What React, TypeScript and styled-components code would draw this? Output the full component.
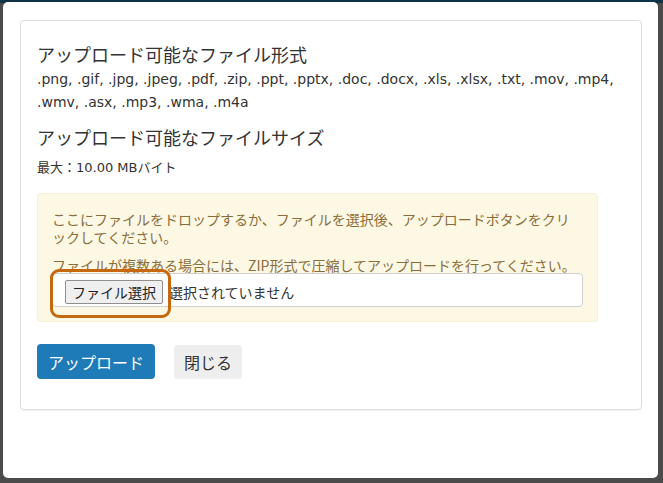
import React from 'react';
import styled, { createGlobalStyle } from 'styled-components';

const GlobalStyle = createGlobalStyle`
  html, body {
    margin: 0;
    padding: 0;
    height: 100%;
  }
  body {
    background: linear-gradient(to bottom, #0f3347 0, #0f3347 3px, #4b4b4b 3px);
    font-family: "DejaVu Sans", "Noto Sans CJK JP", sans-serif;
    color: #333;
    overflow: hidden;
  }
`;

const FORMATS =
  '.png, .gif, .jpg, .jpeg, .pdf, .zip, .ppt, .pptx, .doc, .docx, .xls, .xlsx, .txt, .mov, .mp4, .wmv, .asx, .mp3, .wma, .m4a';

export default function App() {
  return (
    <>
      <GlobalStyle />
      <ModalS>
        <CardS>
          <HeadingS>アップロード可能なファイル形式</HeadingS>
          <FormatsS>{FORMATS}</FormatsS>
          <HeadingS>アップロード可能なファイルサイズ</HeadingS>
          <SizeS>最大：10.00 MBバイト</SizeS>

          <DropZoneS>
            <NoteS>
              ここにファイルをドロップするか、ファイルを選択後、アップロードボタンをクリックしてください。
            </NoteS>
            <NoteS $last>
              ファイルが複数ある場合には、ZIP形式で圧縮してアップロードを行ってください。
            </NoteS>
            <FileRowS>
              <FileBtnS>ファイル選択</FileBtnS>
              <FileNameS>選択されていません</FileNameS>
              <HighlightS />
            </FileRowS>
          </DropZoneS>

          <ActionsS>
            <ButtonS $primary>アップロード</ButtonS>
            <ButtonS>閉じる</ButtonS>
          </ActionsS>
        </CardS>
      </ModalS>
    </>
  );
}

const ModalS = styled.div`
  box-sizing: border-box;
  margin: 2px 5px 0 3px;
  height: 476px;
  background: #fff;
  border-radius: 5px;
  padding: 18px 16px 0 17px;
`;

const CardS = styled.div`
  box-sizing: border-box;
  border: 1px solid #dcdcdc;
  border-radius: 4px;
  box-shadow: 0 1px 1px rgba(0, 0, 0, 0.05);
  height: 390px;
  padding: 21px 16px 0 16px;
`;

const HeadingS = styled.h3`
  margin: 0 0 2px;
  font-family: "Noto Sans CJK JP", sans-serif;
  font-weight: 400;
  font-size: 18px;
  line-height: 24px;
  color: #333;
`;

const FormatsS = styled.p`
  margin: 0 0 11px;
  font-size: 14px;
  line-height: 23px;
  color: #333;
`;

const SizeS = styled.p`
  margin: 8px 0 14px;
  font-size: 13px;
  line-height: 22px;
`;

const DropZoneS = styled.div`
  box-sizing: border-box;
  width: 561px;
  background: #fcf8e4;
  border: 1px solid #f7efd6;
  border-radius: 4px;
  padding: 16px 14px 14px 14px;
`;

const NoteS = styled.p<{ $last?: boolean }>`
  margin: 0 0 ${(p) => (p.$last ? '0' : '10px')};
  font-family: "Noto Sans CJK JP", sans-serif;
  font-size: 14px;
  line-height: 18px;
  color: #8a6d3b;
  line-break: loose;
`;

const FileRowS = styled.div`
  position: relative;
  box-sizing: border-box;
  display: flex;
  align-items: center;
  height: 34px;
  margin-top: -1px;
  background: #fff;
  border: 1px solid #cfcfcf;
  border-radius: 4px;
  padding: 4px 12px 0;
  font-family: "Noto Sans CJK JP", sans-serif;
  font-size: 14px;
  color: #333;
`;

const FileBtnS = styled.span`
  box-sizing: border-box;
  display: flex;
  align-items: center;
  height: 24px;
  padding: 0 6px;
  background: #efefef;
  border: 1px solid #8f8f8f;
  border-radius: 2px;
  color: #222;
`;

const FileNameS = styled.span`
  margin-left: 6px;
`;

const HighlightS = styled.span`
  position: absolute;
  left: -3px;
  top: -5px;
  width: 121px;
  height: 49px;
  box-sizing: border-box;
  border: 3px solid #c5680e;
  border-radius: 9px;
  pointer-events: none;
`;

const ActionsS = styled.div`
  display: flex;
  gap: 19px;
  margin-top: 22px;
`;

const ButtonS = styled.button<{ $primary?: boolean }>`
  box-sizing: border-box;
  height: 35px;
  padding: 0 11px;
  border: none;
  border-radius: 4px;
  font-family: "Noto Sans CJK JP", sans-serif;
  font-size: 16px;
  background: ${(p) => (p.$primary ? '#1e7bb7' : '#eeeeee')};
  color: ${(p) => (p.$primary ? '#fff' : '#333')};
  ${(p) => !p.$primary && 'margin-top: 1px; height: 34px; padding: 0 10px;'}
`;
